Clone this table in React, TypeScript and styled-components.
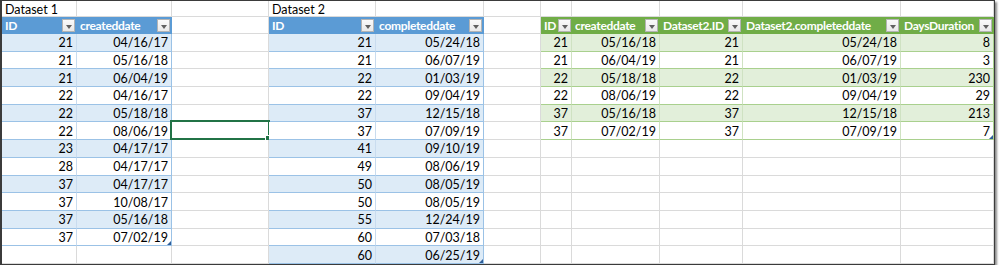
import React from "react";
import styled, { createGlobalStyle, css } from "styled-components";

const Global = createGlobalStyle`
  html, body { margin: 0; padding: 0; background: #ffffff; }
  body { font-family: Lato, "Liberation Sans", sans-serif; }
`;

type Theme = "blue" | "green";
type Kind = "empty" | "title" | "head" | "data";

interface CellSpec {
  text?: string | number;
  kind: Kind;
  theme?: Theme;
  band?: boolean;
  align?: "left" | "right";
  edge?: boolean;
  handle?: boolean;
  selected?: boolean;
}

const palette = {
  blue: { head: "#5b9bd5", band: "#ddebf7", line: "#9bc2e6", inner: "#c9dcef" },
  green: { head: "#70ad47", band: "#e2efda", line: "#a9d08e", inner: "#cfe2c2" },
};

const Frame = styled.div`
  width: 992px;
  height: 263px;
  border-left: 2px solid #3b3b3b;
  border-top: 1px solid #3b3b3b;
  border-right: 1px solid #3b3b3b;
  border-bottom: 1px solid #3b3b3b;
  box-shadow: 2px 2px 2px rgba(0, 0, 0, 0.45);
  display: grid;
  grid-template-columns: 75px 95px 97px 107px 108px 57px 31px 88px 83px 158px 93px;
  grid-template-rows: 16px 17px repeat(13, 1fr);
  overflow: hidden;
  background: #ffffff;
`;

const Cell = styled.div<{
  $kind: Kind;
  $theme?: Theme;
  $band?: boolean;
  $align?: "left" | "right";
  $edge?: boolean;
}>`
  position: relative;
  box-sizing: border-box;
  min-width: 0;
  display: flex;
  align-items: center;
  justify-content: ${(p) => (p.$align === "right" ? "flex-end" : "flex-start")};
  padding: 1px 3px 0 3px;
  font-size: 12.5px;
  color: #000000;
  white-space: nowrap;
  border-right: 1px solid #dadada;
  border-bottom: 1px solid #dadada;
  background: #ffffff;

  ${(p) =>
    p.$kind === "head" &&
    p.$theme &&
    css`
      background: ${palette[p.$theme].head};
      border-right-color: ${palette[p.$theme].head};
      border-bottom-color: ${palette[p.$theme].head};
      color: #ffffff;
      font-weight: 700;
      font-size: 12px;
      letter-spacing: -0.3px;
      justify-content: space-between;
      padding: 0 1px 0 3px;
    `}

  ${(p) =>
    p.$kind === "data" &&
    p.$theme &&
    css`
      background: ${p.$band ? palette[p.$theme].band : "#ffffff"};
      border-bottom-color: ${palette[p.$theme].line};
      border-right-color: ${p.$edge ? palette[p.$theme].line : palette[p.$theme].inner};
    `}
`;

const HeadLabel = styled.span`
  flex: none;
`;

const FilterButton = styled.span`
  flex: none;
  align-self: flex-end;
  margin-bottom: 1px;
  margin-left: 2px;
  width: 13px;
  height: 13px;
  box-sizing: border-box;
  border: 1px solid #b4b4b4;
  background: linear-gradient(#fafafa, #e9e9e9);
  display: flex;
  align-items: center;
  justify-content: center;

  &::after {
    content: "";
    width: 0;
    height: 0;
    margin-top: 2px;
    border-left: 3.5px solid transparent;
    border-right: 3.5px solid transparent;
    border-top: 4px solid #606060;
  }
`;

const ResizeHandle = styled.span`
  position: absolute;
  right: 0;
  bottom: 0;
  width: 0;
  height: 0;
  border-left: 4px solid transparent;
  border-bottom: 4px solid #2f5e99;
`;

const Selection = styled.span`
  position: absolute;
  left: -2px;
  top: -2px;
  right: -2px;
  bottom: -1px;
  border: 2px solid #217346;
  pointer-events: none;

  &::after {
    content: "";
    position: absolute;
    right: -4px;
    bottom: -4px;
    width: 5px;
    height: 5px;
    background: #217346;
    border: 1px solid #ffffff;
  }
`;

const ds1: [number, string][] = [
  [21, "04/16/17"], [21, "05/16/18"], [21, "06/04/19"], [22, "04/16/17"],
  [22, "05/18/18"], [22, "08/06/19"], [23, "04/17/17"], [28, "04/17/17"],
  [37, "04/17/17"], [37, "10/08/17"], [37, "05/16/18"], [37, "07/02/19"],
];

const ds2: [number, string][] = [
  [21, "05/24/18"], [21, "06/07/19"], [22, "01/03/19"], [22, "09/04/19"],
  [37, "12/15/18"], [37, "07/09/19"], [41, "09/10/19"], [49, "08/06/19"],
  [50, "08/05/19"], [50, "08/05/19"], [55, "12/24/19"], [60, "07/03/18"],
  [60, "06/25/19"],
];

const joined: [number, string, number, string, number][] = [
  [21, "05/16/18", 21, "05/24/18", 8],
  [21, "06/04/19", 21, "06/07/19", 3],
  [22, "05/18/18", 22, "01/03/19", 230],
  [22, "08/06/19", 22, "09/04/19", 29],
  [37, "05/16/18", 37, "12/15/18", 213],
  [37, "07/02/19", 37, "07/09/19", 7],
];

const greenHeads = ["ID", "createddate", "Dataset2.ID", "Dataset2.completeddate", "DaysDuration"];

const empty = (): CellSpec => ({ kind: "empty" });

function tableCells(
  rows: (string | number)[][],
  heads: string[],
  theme: Theme,
  r: number
): CellSpec[] {
  if (r === 0) return heads.map((h) => ({ kind: "head", theme, text: h }));
  const row = rows[r - 1];
  if (!row) return heads.map(empty);
  return row.map((v, i) => ({
    kind: "data",
    theme,
    text: v,
    align: "right",
    band: r % 2 === 1,
    edge: i === row.length - 1,
    handle: r === rows.length && i === row.length - 1,
  }));
}

function buildGrid(): CellSpec[][] {
  const grid: CellSpec[][] = [];
  grid.push([
    { kind: "title", text: "Dataset 1" },
    empty(),
    empty(),
    { kind: "title", text: "Dataset 2" },
    ...Array.from({ length: 7 }, empty),
  ]);
  for (let r = 0; r < 14; r++) {
    const a = tableCells(ds1, ["ID", "createddate"], "blue", r);
    const c: CellSpec = { kind: "empty", selected: r === 6 };
    const d = tableCells(ds2, ["ID", "completeddate"], "blue", r);
    const f = empty();
    const g = tableCells(joined, greenHeads, "green", r);
    grid.push([...a, c, ...d, f, ...g]);
  }
  return grid;
}

export default function App() {
  const grid = buildGrid();
  return (
    <>
      <Global />
      <Frame>
        {grid.map((row, r) =>
          row.map((cell, c) => (
            <Cell
              key={`${r}-${c}`}
              $kind={cell.kind}
              $theme={cell.theme}
              $band={cell.band}
              $align={cell.align}
              $edge={cell.edge}
            >
              {cell.kind === "head" ? (
                <>
                  <HeadLabel>{cell.text}</HeadLabel>
                  <FilterButton />
                </>
              ) : (
                cell.text
              )}
              {cell.handle && <ResizeHandle />}
              {cell.selected && <Selection />}
            </Cell>
          ))
        )}
      </Frame>
    </>
  );
}
